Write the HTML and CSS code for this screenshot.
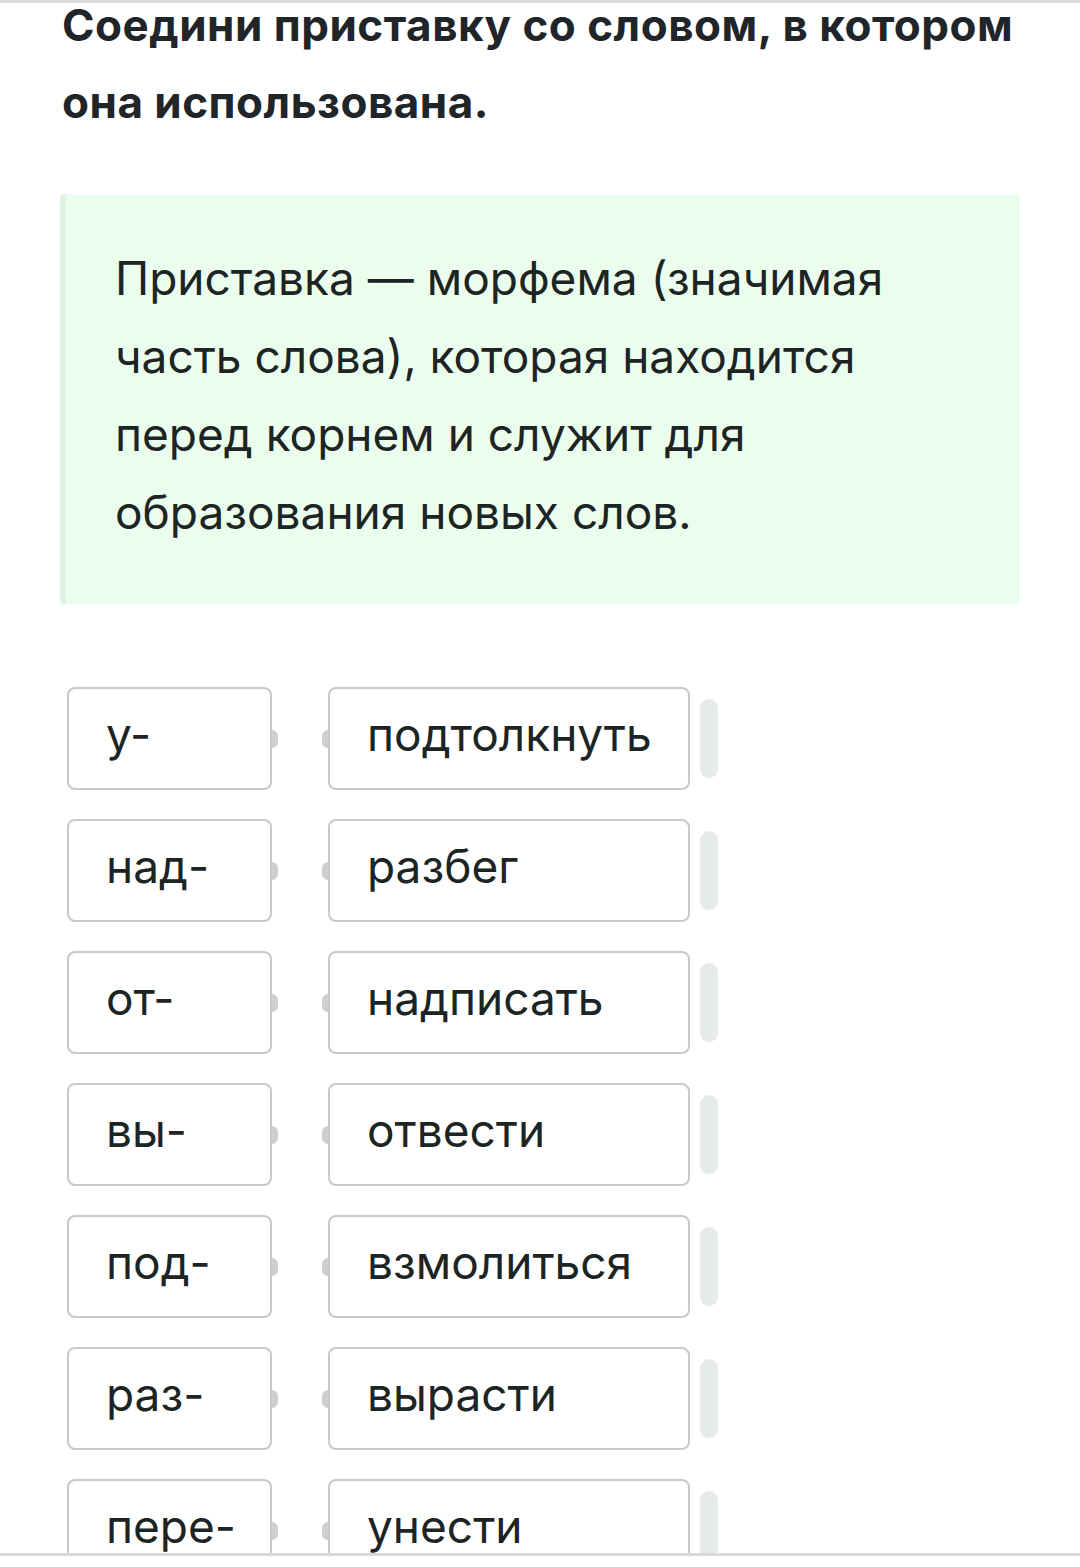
FILE: index.html
```html
<!DOCTYPE html>
<html lang="ru">
<head>
<meta charset="utf-8">
<link rel="stylesheet" href="styles.css">
</head>
<body>
<div class="topline"></div>
<main class="page">
  <h1 class="title">Соедини приставку со словом, в котором она использована.</h1>
  <div class="hint">
    <p>Приставка — морфема (значимая часть слова), которая находится перед корнем и служит для образования новых слов.</p>
  </div>
  <div class="pairs">
    <div class="row"><div class="card left">у-</div><div class="card right">подтолкнуть</div><div class="handle"></div></div>
    <div class="row"><div class="card left">над-</div><div class="card right">разбег</div><div class="handle"></div></div>
    <div class="row"><div class="card left">от-</div><div class="card right">надписать</div><div class="handle"></div></div>
    <div class="row"><div class="card left">вы-</div><div class="card right">отвести</div><div class="handle"></div></div>
    <div class="row"><div class="card left">под-</div><div class="card right">взмолиться</div><div class="handle"></div></div>
    <div class="row"><div class="card left">раз-</div><div class="card right">вырасти</div><div class="handle"></div></div>
    <div class="row"><div class="card left">пере-</div><div class="card right">унести</div><div class="handle"></div></div>
  </div>
</main>
<div class="bottombar"></div>
</body>
</html>
```
FILE: styles.css
```css
html, body {
  margin: 0;
  padding: 0;
  background: #ffffff;
  overflow: hidden;
}
body {
  font-family: Inter, "Noto Sans", sans-serif;
  color: #1c2424;
}
.topline {
  height: 3px;
  background: #dcdcdc;
}
.page {
  padding: 0 60px;
}
.title {
  margin: -16px 0 0 2px;
  font-size: 44px;
  line-height: 77px;
  font-weight: 700;
  color: #1f2529;
  letter-spacing: 0.5px;
}
.hint {
  margin-top: 53px;
  width: 960px;
  box-sizing: border-box;
  height: 410px;
  background: #ebfdec;
  border-left: 6px solid #dff3e2;
  border-radius: 4px;
  padding: 45px 80px 0 49px;
}
.hint p {
  margin: 0;
  font-size: 46px;
  line-height: 78px;
  color: #1c2424;
}
.pairs {
  margin-top: 83px;
  margin-left: 7px;
  display: flex;
  flex-direction: column;
  gap: 29px;
}
.row {
  display: flex;
  align-items: center;
}
.card {
  position: relative;
  box-sizing: border-box;
  height: 103px;
  border: 2px solid #c9c9c9;
  border-radius: 8px;
  background: #fff;
  display: flex;
  align-items: center;
  padding-bottom: 9px;
  font-size: 46px;
  color: #1c2424;
}
.card.left {
  width: 205px;
  padding-left: 37px;
}
.card.right {
  width: 362px;
  margin-left: 56px;
  padding-left: 37px;
}
.card.left::after,
.card.right::before {
  content: "";
  position: absolute;
  top: 50%;
  width: 6px;
  height: 18px;
  margin-top: -9px;
  background: #cfcfcf;
}
.card.left::after {
  right: -8px;
  border-radius: 0 9px 9px 0;
}
.card.right::before {
  left: -8px;
  border-radius: 9px 0 0 9px;
}
.handle {
  width: 18px;
  height: 79px;
  margin-left: 10px;
  border-radius: 9px;
  background: #e6eaea;
}
.bottombar {
  position: fixed;
  left: 0;
  right: 0;
  bottom: 0;
  height: 11px;
  background: #fff;
  border-top: 3px solid #d9d9d9;
}
```
